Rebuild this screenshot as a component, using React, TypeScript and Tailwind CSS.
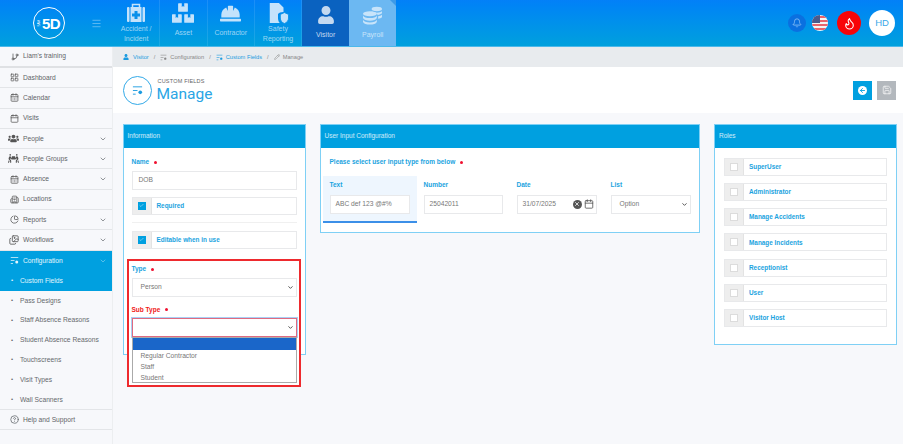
import { useState } from "react";
import { Bell, Calendar, CalendarDays, ChevronDown, CircleHelp, Flame, GitBranch, LayoutGrid, Menu, Pencil, Save, Building2, PieChart, Images, X, ArrowLeft, Check } from "lucide-react";
import { FaBoxes, FaHardHat, FaUser, FaUsers, FaPeopleCarry } from "react-icons/fa";

function MedicalIcon() {
  return (
    <svg viewBox="0 0 20 20" className="w-[20px] h-[20px]" fill="currentColor">
      <path d="M6.500 4V1.500h7V4" fill="none" stroke="currentColor" strokeWidth="1.500" />
      <rect x="1" y="4" width="2.500" height="15" rx="1" />
      <rect x="16.500" y="4" width="2.500" height="15" rx="1" />
      <path d="M4.500 4h11v15h-11z" />
      <path d="M8.500 8h3v2.500H14v3h-2.500V16h-3v-2.500H6v-3h2.500z" fill="#0a90ea" />
    </svg>
  );
}

function SafetyIcon() {
  return (
    <svg viewBox="0 0 24 24" className="w-[22px] h-[22px]" fill="currentColor">
      <path d="M3 1h10l5 5v5c-3 0-5 1-6 2v5c0 2 1 4 2 5H3z" />
      <path d="M19 11.500l4.500 2v4c0 3-2 5-4.500 6-2.500-1-4.500-3-4.500-6v-4z" stroke="#0892e8" strokeWidth="1" />
    </svg>
  );
}

function PayrollIcon() {
  return (
    <svg viewBox="0 0 24 22" className="w-[21px] h-[19px]" fill="currentColor">
      <ellipse cx="9" cy="9" rx="8" ry="3" />
      <path d="M1 11c1 2 4 3 8 3s7-1 8-3v3c-1 2-4 3-8 3s-7-1-8-3z" />
      <path d="M1 16c1 2 4 3 8 3s7-1 8-3v2.500c-1 2-4 3-8 3s-7-1-8-3z" />
      <ellipse cx="17" cy="3.500" rx="6" ry="2.500" />
      <path d="M11 6c1 1 3 1.700 6 1.700S22 7 23 6v2.500c-1 1-3 1.700-5 1.800-.5-1.300-2.500-2.300-7-3z" />
      <path d="M18.500 12c2-.2 3.500-.8 4.500-1.800v2.800c-1 1-2.500 1.600-4.500 1.800z" />
    </svg>
  );
}

function ConfigIcon({ size = 9, className = "" }: { size?: number; className?: string }) {
  return (
    <svg viewBox="0 0 12 12" width={size} height={size} className={className} fill="none" stroke="currentColor" strokeWidth="1">
      <path d="M1 2h10M1 6h5M1 10h3" />
      <circle cx="9" cy="8" r="2" fill="currentColor" stroke="none" />
    </svg>
  );
}

const tiles = [
  { icon: <MedicalIcon />, label: ["Accident /", "Incident"] },
  { icon: <FaBoxes size={22} />, label: ["Asset"] },
  { icon: <FaHardHat size={21} />, label: ["Contractor"] },
  { icon: <SafetyIcon />, label: ["Safety", "Reporting"] },
];

const topItems = [
  { icon: <LayoutGrid size={9} />, label: "Dashboard" },
  { icon: <CalendarDays size={9} />, label: "Calendar" },
  { icon: <Calendar size={9} />, label: "Visits" },
  { icon: <FaUsers size={11} />, label: "People", more: true },
  { icon: <FaPeopleCarry size={11} />, label: "People Groups", more: true },
  { icon: <CalendarDays size={9} />, label: "Absence", more: true },
  { icon: <Building2 size={9} />, label: "Locations" },
  { icon: <PieChart size={9} />, label: "Reports", more: true },
  { icon: <Images size={10} />, label: "Workflows", more: true },
];

const subItems = ["Pass Designs", "Staff Absence Reasons", "Student Absence Reasons", "Touchscreens", "Visit Types", "Wall Scanners"];

const roles = ["SuperUser", "Administrator", "Manage Accidents", "Manage Incidents", "Receptionist", "User", "Visitor Host"];

function SideRow({ icon, label, more }: { icon: React.ReactNode; label: string; more?: boolean }) {
  return (
    <div className="h-[20.3px] flex items-center border-b border-[#e3e5e8] text-[#5f6468]">
      <span className="w-[23px] flex justify-end pr-[4px] text-[#555]">{icon}</span>
      <span>{label}</span>
      {more && <ChevronDown size={8} className="ml-auto mr-[5px]" />}
    </div>
  );
}

function Card({ title, className, children }: { title: string; className: string; children: React.ReactNode }) {
  return (
    <div className={`relative bg-white border border-[#7fd0f5] ${className}`}>
      <div className="h-[23px] bg-[#00a0e0] text-white/80 text-[6.500px] flex items-center pl-[4px]">{title}</div>
      {children}
    </div>
  );
}

function Field({ value, className = "" }: { value: string; className?: string }) {
  return <div className={`h-[19px] bg-white border border-[#e8e9eb] text-[#777] text-[6.700px] flex items-center pl-[5px] ${className}`}>{value}</div>;
}

function CheckRow({ label, checked }: { label: string; checked?: boolean }) {
  return (
    <div className="h-[18px] flex border border-[#e8e9eb] bg-white">
      <div className="w-[19px] bg-[#eeeeee] flex items-center justify-center border-r border-[#e3e3e3]">
        {checked ? (
          <span className="w-[8px] h-[8px] bg-[#00a0e0] flex items-center justify-center"><Check size={5} className="text-white" /></span>
        ) : (
          <span className="w-[8px] h-[8px] bg-white border border-[#dcdcdc]" />
        )}
      </div>
      <div className="pl-[5px] flex items-center text-[#1ba3e0] text-[6.400px] font-bold">{label}</div>
    </div>
  );
}

function Label({ text, required, red }: { text: string; required?: boolean; red?: boolean }) {
  return (
    <div className={`h-[9px] flex items-center text-[6.500px] font-bold ${red ? "text-[#f02020]" : "text-[#1ba3e0]"}`}>
      {text}
      {required && <span className="ml-[5px] w-[3px] h-[3px] rounded-full bg-[#f01030]" />}
    </div>
  );
}

function SelectBox({ value, active }: { value: string; active?: boolean }) {
  return (
    <div className={`h-[19px] bg-white flex items-center justify-between pl-[8px] pr-[2px] text-[6.700px] text-[#777] border ${active ? "border-[#e06a80] outline outline-1 outline-[#a9d1f5]" : "border-[#e8e9eb]"}`}>
      <span>{value}</span>
      <ChevronDown size={7} strokeWidth={3} className="text-[#444]" />
    </div>
  );
}

export default function App() {
  const [subType] = useState("");

  return (
    <div className="w-[903px] h-[444px] overflow-hidden flex flex-col bg-[#f7f8fb] font-['Liberation_Sans',Arial,sans-serif]">
      {/* HEADER */}
      <div className="h-[47px] shrink-0 flex bg-gradient-to-b from-[#0380f8] to-[#00a0dd] border-b border-[#4cb8ea]">
        <div className="w-[113px] shrink-0 flex items-center pl-[33px]">
          <div className="w-[32px] h-[32px] rounded-full border-[1.5px] border-white flex items-center justify-center text-white">
            <span className="text-[3px] -rotate-90 w-[3px] flex justify-center">SAM</span>
            <span className="text-[15px] font-bold leading-none tracking-[-0.5px] ml-[1px]">5D</span>
          </div>
          <Menu size={11} strokeWidth={1.5} className="ml-[26px] text-white/50" />
        </div>
        {tiles.map((t) => (
          <div key={t.label[0]} className="w-[47.300px] flex flex-col items-center pt-[3px] border-r border-white/10 text-white/60">
            <div className="h-[20px] flex items-center justify-center text-[#c4e2fb]">{t.icon}</div>
            <div className={`text-[7px] leading-[10px] text-center ${t.label.length === 1 ? "mt-[5px]" : "mt-[1px]"}`}>
              {t.label.map((l) => <div key={l}>{l}</div>)}
            </div>
          </div>
        ))}
        <div className="w-[47px] bg-[#0a62c0] flex flex-col items-center pt-[6px] text-[#c4d9f0]">
          <FaUser size={18} />
          <div className="text-[7px] mt-[6px]">Visitor</div>
        </div>
        <div className="relative w-[47px] bg-[#6cb8f2] flex flex-col items-center pt-[6px] text-[#c8e4fa]">
          <PayrollIcon />
          <div className="text-[7px] mt-[5px]">Payroll</div>
          <svg viewBox="0 0 6 6" className="absolute right-0 top-0 w-[6px] h-[6px]"><path d="M0 0h6v6z" fill="#3d9ae8" /></svg>
        </div>
        <div className="ml-auto flex items-center pr-[8px]">
          <div className="w-[18px] h-[18px] rounded-full bg-[#0a70e0] flex items-center justify-center text-[#8cc0f4]">
            <Bell size={10} />
          </div>
          <svg viewBox="0 0 16 16" className="w-[16px] h-[16px] ml-[6px] rounded-full">
            <rect width="16" height="16" fill="#f4f4f4" />
            <rect y="1" width="16" height="2" fill="#e8646c" />
            <rect y="5" width="16" height="2" fill="#e8646c" />
            <rect y="9" width="16" height="2" fill="#e8646c" />
            <rect y="13" width="16" height="2" fill="#e8646c" />
            <rect width="8" height="8" fill="#4a5a8c" />
          </svg>
          <div className="w-[24px] h-[24px] ml-[9px] rounded-full bg-[#f80408] flex items-center justify-center text-white">
            <Flame size={13} />
          </div>
          <div className="w-[26px] h-[26px] ml-[8px] rounded-full bg-white flex items-center justify-center text-[9.500px] text-[#3aa8e8]">HD</div>
        </div>
      </div>

      <div className="flex-1 flex min-h-0">
        {/* SIDEBAR */}
        <div className="w-[113px] shrink-0 border-r border-[#eceef0] text-[6.700px]">
          <div className="h-[21px] flex items-center border-b-2 border-[#dfe1e4] text-[#5f6468]">
            <span className="w-[23px] flex justify-end pr-[4px]"><GitBranch size={8} className="text-[#444]" /></span>
            Liam's training
          </div>
          {topItems.map((i) => <SideRow key={i.label} {...i} />)}
          <div className="h-[20px] bg-[#00a0e0] flex items-center text-white/90">
            <span className="w-[23px] flex justify-end pr-[4px]"><ConfigIcon /></span>
            Configuration
            <ChevronDown size={8} className="ml-auto mr-[5px] text-white/50" />
          </div>
          <div className="h-[20px] bg-[#00a0e0] flex items-center text-white/90">
            <span className="w-[20px] pl-[11px] text-[6px]">•</span>Custom Fields
          </div>
          {subItems.map((s) => (
            <div key={s} className="h-[19.800px] flex items-center text-[#66696d]">
              <span className="w-[20px] pl-[11px] text-[6px]">•</span>{s}
            </div>
          ))}
          <div className="h-[20.500px] flex items-center text-[#5f6468] border-y border-[#e3e5e8]">
            <span className="w-[23px] flex justify-end pr-[4px]"><CircleHelp size={9} /></span>
            Help and Support
          </div>
        </div>

        {/* MAIN */}
        <div className="flex-1 min-w-0 flex flex-col">
          <div className="h-[20px] bg-[#e8ebee] flex items-center pl-[10px] text-[5.700px] text-[#888] gap-[3px]">
            <FaUser size={6} className="text-[#1b9be0]" />
            <span className="text-[#1b9be0] ml-[1px]">Visitor</span><span className="mx-[2px]">/</span>
            <ConfigIcon size={7} />
            <span>Configuration</span><span className="mx-[2px]">/</span>
            <ConfigIcon size={7} className="text-[#1b9be0]" />
            <span className="text-[#1b9be0]">Custom Fields</span><span className="mx-[2px]">/</span>
            <Pencil size={6} />
            <span>Manage</span>
          </div>

          <div className="h-[46px] bg-white flex items-center pl-[9.500px] pr-[7px]">
            <div className="w-[29px] h-[29px] rounded-full border border-[#33aae8] flex items-center justify-center text-[#1b9be0]">
              <ConfigIcon size={11} />
            </div>
            <div className="ml-[5px] mt-[1px]">
              <div className="ml-[1px] text-[5.500px] text-[#666] tracking-[0.2px] leading-[7px]">CUSTOM FIELDS</div>
              <div className="text-[15.500px] leading-[18px] text-[#2aa5e5] font-['Roboto',sans-serif]">Manage</div>
            </div>
            <div className="ml-auto flex gap-[5px]">
              <div className="w-[19px] h-[19px] bg-[#00a0e0] flex items-center justify-center">
                <span className="w-[9px] h-[9px] rounded-full bg-white flex items-center justify-center"><ArrowLeft size={7} strokeWidth={3} className="text-[#00a0e0]" /></span>
              </div>
              <div className="w-[19px] h-[19px] bg-[#b3b8bd] flex items-center justify-center"><Save size={10} className="text-white/80" /></div>
            </div>
          </div>

          <div className="flex items-start pl-[9.500px] pt-[10.500px] gap-[14px]">
            {/* INFORMATION */}
            <Card title="Information" className="w-[183px] h-[231px]">
              <div className="absolute left-[3px] top-[134px] w-[174px] h-[128px] bg-white border-2 border-[#ee2a2e] z-10" />
              <div className="relative z-20 px-[8px] pt-[10px]">
                <Label text="Name" required />
                <Field value="DOB" className="mt-[4px] pl-[6px]" />
                <div className="mt-[7px]"><CheckRow label="Required" checked /></div>
                <div className="h-px bg-[#f0f0f0] mt-[7px] mb-[8px]" />
                <CheckRow label="Editable when in use" checked />
                <div className="mt-[16px]"><Label text="Type" required /></div>
                <div className="mt-[4px]"><SelectBox value="Person" /></div>
                <div className="mt-[8.500px]"><Label text="Sub Type" required red /></div>
                <div className="relative mt-[4px]">
                  <SelectBox value={subType} active />
                  <div className="absolute left-0 right-0 top-[19px] h-[46px] bg-white border border-[#aaa] text-[6.700px] text-[#777]">
                    <div className="h-[11.500px] bg-[#1a66c9]" />
                    <div className="pl-[8px] leading-[11.300px]">
                      <div>Regular Contractor</div>
                      <div>Staff</div>
                      <div>Student</div>
                    </div>
                  </div>
                </div>
              </div>
            </Card>

            {/* USER INPUT */}
            <Card title="User Input Configuration" className="w-[380.500px] h-[109.500px]">
              <div className="pt-[10px] pl-[9px]"><Label text="Please select user input type from below" required /></div>
              <div className="flex pl-[2px] mt-[9px]">
                <div className="w-[94px] h-[47px] bg-[#eef6fe] border-b-2 border-[#3b8fe8] px-[7px] pt-[5px]">
                  <Label text="Text" />
                  <Field value="ABC def 123 @#%" className="mt-[5px]" />
                </div>
                <div className="w-[93px] px-[7px] pt-[5px]">
                  <Label text="Number" />
                  <Field value="25042011" className="mt-[5px] w-[79px]" />
                </div>
                <div className="w-[94px] px-[7px] pt-[5px]">
                  <Label text="Date" />
                  <div className="mt-[5px] h-[19px] border border-[#e8e9eb] flex items-center pl-[5px] pr-[2px] text-[6.700px] text-[#777] w-[80px]">
                    31/07/2025
                    <span className="ml-auto w-[9px] h-[9px] rounded-full bg-[#555] flex items-center justify-center"><X size={6} strokeWidth={3} className="text-white" /></span>
                    <Calendar size={10} className="ml-[2px] text-[#555]" />
                  </div>
                </div>
                <div className="w-[94px] px-[7px] pt-[5px]">
                  <Label text="List" />
                  <div className="mt-[5px] w-[80px]"><SelectBox value="Option" /></div>
                </div>
              </div>
            </Card>

            {/* ROLES */}
            <Card title="Roles" className="w-[183px] h-[221px]">
              <div className="px-[9px] pt-[10px] flex flex-col gap-[7.300px]">
                {roles.map((r) => <CheckRow key={r} label={r} />)}
              </div>
            </Card>
          </div>
        </div>
      </div>
    </div>
  );
}
